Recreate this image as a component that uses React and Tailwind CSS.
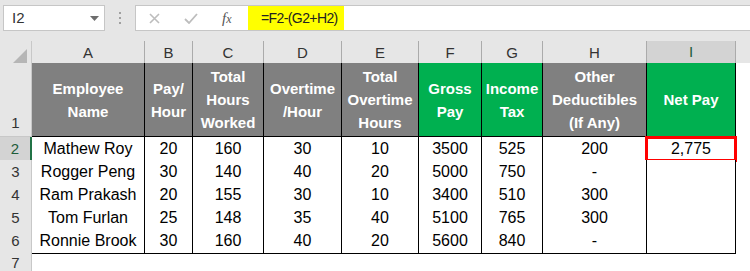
import React from "react";

const gridCols =
    "grid grid-cols-[32px_113px_48px_71px_78px_77px_63px_61px_104px_89px_1fr]";

const letters = ["A", "B", "C", "D", "E", "F", "G", "H", "I"];

const headers = [
    { lines: ["Employee", "Name"], green: false },
    { lines: ["Pay/", "Hour"], green: false },
    { lines: ["Total", "Hours", "Worked"], green: false },
    { lines: ["Overtime", "/Hour"], green: false },
    { lines: ["Total", "Overtime", "Hours"], green: false },
    { lines: ["Gross", "Pay"], green: true },
    { lines: ["Income", "Tax"], green: true },
    { lines: ["Other", "Deductibles", "(If Any)"], green: false },
    { lines: ["Net Pay"], green: true },
];

const rows = [
    ["Mathew Roy", "20", "160", "30", "10", "3500", "525", "200", "2,775"],
    ["Rogger Peng", "30", "140", "40", "20", "5000", "750", "-", ""],
    ["Ram Prakash", "20", "155", "30", "10", "3400", "510", "300", ""],
    ["Tom Furlan", "25", "148", "35", "40", "5100", "765", "300", ""],
    ["Ronnie Brook", "30", "160", "40", "20", "5600", "840", "-", ""],
];

function FormulaBar() {
    return (
        <div className="h-[41px] bg-[#e6e6e6] pt-[5px] flex items-start">
            <div className="ml-[3px] w-[102px] h-[26px] bg-white border border-[#c6c6c6] flex items-center justify-between pl-[8px] pr-[5px]">
                <span className="text-[15px] text-[#333]">I2</span>
                <svg width="9" height="5" viewBox="0 0 9 5">
                    <path d="M0 0h9L4.5 5z" fill="#6d6d6d" />
                </svg>
            </div>
            <div className="w-[30px] h-[26px] flex flex-col items-center justify-center gap-[3px]">
                <span className="w-[2px] h-[2px] bg-[#a0a0a0]" />
                <span className="w-[2px] h-[2px] bg-[#a0a0a0]" />
                <span className="w-[2px] h-[2px] bg-[#a0a0a0]" />
            </div>
            <div className="flex-1 h-[26px] bg-white border-y border-l border-[#c6c6c6] flex items-stretch">
                <div className="w-[111px] flex items-center">
                    <svg className="ml-[13px]" width="11" height="11" viewBox="0 0 11 11">
                        <path d="M1 1l9 9M10 1l-9 9" stroke="#bdbdbd" strokeWidth="1.6" />
                    </svg>
                    <svg className="ml-[24px]" width="14" height="11" viewBox="0 0 14 11">
                        <path d="M1 6l4 4 8-9" stroke="#bdbdbd" strokeWidth="1.8" fill="none" />
                    </svg>
                    <span className="ml-[24px] font-['Liberation_Serif',serif] italic text-[15px] text-[#555] leading-none">
                        f<span className="text-[12px]">x</span>
                    </span>
                </div>
                <div className="w-[96px] ml-[1px] bg-[#ffff00] flex items-center pl-[13px] text-[14px] tracking-[-0.6px] text-[#222]">
                    =F2-(G2+H2)
                </div>
            </div>
        </div>
    );
}

function ColumnHeaders() {
    return (
        <div className={`${gridCols} h-[22px] bg-[#e6e6e6]`}>
            <div className="border-r border-b border-[#c8c8c8] flex items-end justify-end pr-[4px] pb-[2px]">
                <svg width="14" height="14" viewBox="0 0 14 14">
                    <path d="M14 0v14H0z" fill="#b6b6b6" />
                </svg>
            </div>
            {letters.map((l) =>
                l === "I" ? (
                    <div
                        key={l}
                        className="bg-[#d3d3d3] border-r border-[#ababab] border-b-2 border-b-[#217346] flex items-center justify-center text-[15px] text-[#1e5c3a]"
                    >
                        {l}
                    </div>
                ) : (
                    <div
                        key={l}
                        className="border-r border-b border-[#ababab] border-b-[#d0d0d0] flex items-center justify-center text-[15px] text-[#333]"
                    >
                        {l}
                    </div>
                )
            )}
            <div className="border-b border-[#d0d0d0]" />
        </div>
    );
}

function HeaderRow() {
    return (
        <div className={`${gridCols} h-[74px]`}>
            <div className="bg-[#e6e6e6] border-r border-b border-[#c8c8c8] flex items-end justify-center pb-[2px] text-[15px] text-[#333]">
                1
            </div>
            {headers.map((h, i) => (
                <div
                    key={i}
                    className={`${h.green ? "bg-[#00b050]" : "bg-[#808080]"} border-r border-b border-black flex flex-col items-center justify-center text-white font-bold text-[15px] leading-[23px]`}
                >
                    {h.lines.map((line) => (
                        <span key={line}>{line}</span>
                    ))}
                </div>
            ))}
            <div className="bg-white" />
        </div>
    );
}

function DataRow({ n, cells }) {
    const selected = n === 2;
    return (
        <div className={`${gridCols} h-[23px]`}>
            <div
                className={
                    selected
                        ? "bg-[#d3d3d3] border-r-2 border-r-[#217346] border-b border-b-[#c8c8c8] flex items-center justify-center text-[15px] text-[#1e5c3a]"
                        : "bg-[#e6e6e6] border-r border-b border-[#c8c8c8] flex items-center justify-center text-[15px] text-[#333]"
                }
            >
                {n}
            </div>
            {cells.map((c, i) => (
                <div
                    key={i}
                    className="relative bg-white border-r border-b border-black flex items-center justify-center text-[16px] text-black"
                >
                    {c}
                    {selected && i === 8 && (
                        <div className="absolute -left-[2px] -top-[1px] -right-[2px] -bottom-[1px] border-[3px] border-[#ff0000]" />
                    )}
                </div>
            ))}
            <div className="bg-white" />
        </div>
    );
}

export default function App() {
    return (
        <div className="w-[750px] h-[271px] overflow-hidden bg-white font-['Liberation_Sans',Arial,sans-serif]">
            <FormulaBar />
            <ColumnHeaders />
            <HeaderRow />
            {rows.map((r, i) => (
                <DataRow key={i} n={i + 2} cells={r} />
            ))}
            <div className={`${gridCols} h-[19px]`}>
                <div className="bg-[#e6e6e6] border-r border-[#c8c8c8] flex items-center justify-center text-[15px] text-[#333]">
                    7
                </div>
            </div>
        </div>
    );
}
